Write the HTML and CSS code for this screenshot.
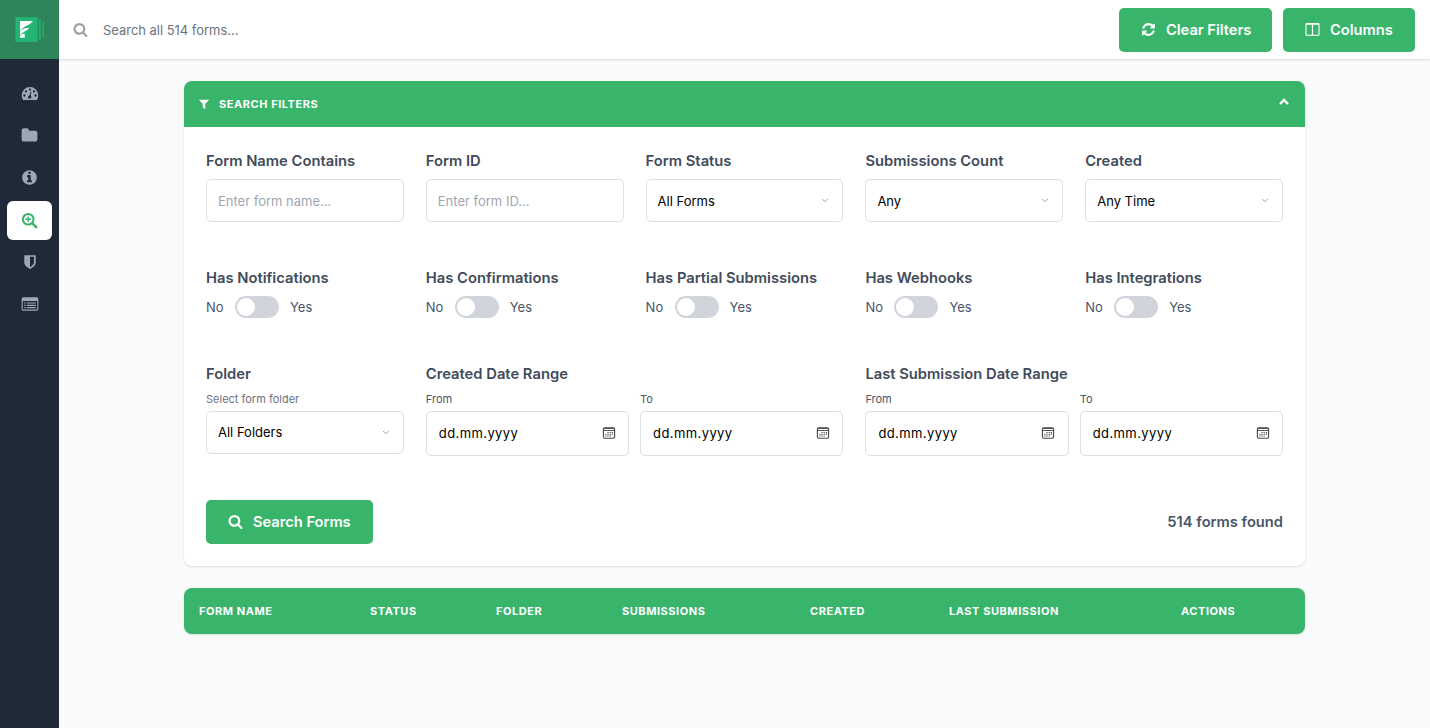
FILE: index.html
```html
<!DOCTYPE html>
<html lang="en">
<head>
<meta charset="utf-8">
<title>Search Forms</title>
<link rel="stylesheet" href="styles.css">
</head>
<body>
<svg width="0" height="0" class="defs">
  <symbol id="search" viewBox="0 0 1792 1792"><path d="M1216 832q0-185-131.500-316.500t-316.500-131.500-316.500 131.500-131.500 316.500 131.500 316.500 316.500 131.500 316.500-131.500 131.500-316.500zm512 832q0 52-38 90t-90 38q-54 0-90-38l-343-342q-179 124-399 124-143 0-273.500-55.500t-225-150-150-225-55.500-273.500 55.500-273.500 150-225 225-150 273.500-55.500 273.500 55.500 225 150 150 225 55.500 273.500q0 220-124 399l343 343q37 37 37 90z"/></symbol>
  <symbol id="chev" viewBox="0 0 8 5"><path d="M1 1l3 2.700L7 1" fill="none" stroke="#9a9fa8" stroke-width=".9"/></symbol>
  <symbol id="cal" viewBox="0 0 14 14"><rect x="1.400" y="1.700" width="11.200" height="10.600" rx="1.500" fill="none" stroke="#444" stroke-width="1.100"/><path d="M1.500 2.500h11M1.500 4.500h11" stroke="#444" stroke-width=".9"/><path d="M5.400 6.600h1.200M7.600 6.600h1.200M9.800 6.600h1.200M3.300 8.300h1.200M5.400 8.300h1.200M7.600 8.300h1.200M9.800 8.300h1.200M3.300 10h1.200M5.400 10h1.200M7.600 10h1.200" stroke="#444" stroke-width="1"/></symbol>
</svg>
<div class="app">
  <aside class="sidebar">
    <div class="logo">
      <svg width="32" height="28" viewBox="0 0 32 28"><path d="M1.500 3.200h22v24.800h-22z" fill="#22b573"/><path d="M24.700 5.200h2.200v20.600h-2.200z" fill="#22b573" opacity=".8"/><path d="M28.400 7.300H30v16.400h-1.600z" fill="#22b573" opacity=".8"/><path d="M6 7h12.700c-1.800 3.500-5.200 3.700-8.300 6.100-1.800 1.300-3 2.500-4.400 4.400zM6 18c2-3 5-4.200 9.400-4.200-1.300 2.600-3.600 2.900-5.500 4.100-1.500 1-2.500 1.900-3.900 3.300zM6 22c1.300-1.600 2.800-2.500 4.700-2.600v4.300H6z" fill="#fff"/></svg>
    </div>
    <nav class="nav">
      <a class="nav-item"><svg width="18" height="16" viewBox="0 0 18 16"><path fill="currentColor" d="M9 1a8.300 8.300 0 0 0-8.300 8.300c0 1.600.4 3.100 1.200 4.400.2.200.4.300.7.300h12.800c.3 0 .5-.1.700-.3.800-1.300 1.200-2.800 1.200-4.400A8.300 8.300 0 0 0 9 1z"/><g fill="#1f2937"><circle cx="3.400" cy="9.500" r="1.150"/><circle cx="5" cy="5.400" r="1.150"/><circle cx="9" cy="3.600" r="1.150"/><circle cx="13" cy="5.400" r="1.150"/><circle cx="14.600" cy="9.500" r="1.150"/><circle cx="8.700" cy="11" r="1.700"/></g><path d="M8.800 10.800l1.200-5" stroke="#1f2937" stroke-width="1"/></svg></a>
      <a class="nav-item"><svg width="17" height="17" viewBox="0 0 1792 1792"><path fill="currentColor" d="M1728 608v704q0 92-66 158t-158 66h-1216q-92 0-158-66t-66-158v-960q0-92 66-158t158-66h320q92 0 158 66t66 158v32h672q92 0 158 66t66 158z"/></svg></a>
      <a class="nav-item"><svg width="17" height="17" viewBox="0 0 1792 1792"><path fill="currentColor" d="M1152 1376v-160q0-14-9-23t-23-9h-96v-512q0-14-9-23t-23-9h-320q-14 0-23 9t-9 23v160q0 14 9 23t23 9h96v320h-96q-14 0-23 9t-9 23v160q0 14 9 23t23 9h448q14 0 23-9t9-23zm-128-896v-160q0-14-9-23t-23-9h-192q-14 0-23 9t-9 23v160q0 14 9 23t23 9h192q14 0 23-9t9-23zm640 416q0 209-103 385.500t-279.500 279.500-385.500 103-385.500-103-279.500-279.500-103-385.500 103-385.500 279.500-279.500 385.500-103 385.500 103 279.500 279.500 103 385.500z"/></svg></a>
      <a class="nav-item active"><svg width="17" height="17" viewBox="0 0 17 17" fill="none" stroke="currentColor"><circle cx="7.200" cy="7.200" r="5.300" stroke-width="2"/><path d="M11.200 11.200l4 4" stroke-width="2.500" stroke-linecap="round"/><path d="M7.200 4.400v5.600M4.400 7.200H10" stroke-width="1.400"/></svg></a>
      <a class="nav-item"><svg width="16" height="16" viewBox="0 0 1792 1792"><path fill="currentColor" d="M1344 960v-640h-448v1137q119-63 213-137 235-184 235-360zm192-768v768q0 86-33.500 170.500t-83 150-118 127.500-126.500 103-121 77.500-89.500 49.500-42.500 20q-12 6-26 6t-26-6q-16-7-42.500-20t-89.500-49.500-121-77.500-126.500-103-118-127.500-83-150-33.500-170.500v-768q0-26 19-45t45-19h1152q26 0 45 19t19 45z"/></svg></a>
      <a class="nav-item"><svg width="18" height="16" viewBox="0 0 18 16"><rect x="1.200" y="1.900" width="15.600" height="12.200" rx="1.200" fill="none" stroke="currentColor" stroke-width="1.100"/><path d="M1 2h16v3H1z" fill="currentColor"/><path d="M3.200 7h1.500M3.200 9.300h1.500M3.200 11.600h1.500M5.800 7h9M5.800 9.300h9M5.800 11.600h9" stroke="currentColor" stroke-width="1.200"/></svg></a>
    </nav>
  </aside>
  <div class="main">
    <header class="topbar">
      <svg class="top-search" width="15" height="15"><use href="#search"/></svg>
      <span class="search-text">Search all 514 forms...</span>
      <div class="btn clear"><svg width="15" height="15" viewBox="0 0 1792 1792"><path fill="currentColor" d="M1639 1056q0 5-1 7-64 268-268 434.500t-478 166.500q-146 0-282.500-55t-243.500-157l-129 129q-19 19-45 19t-45-19-19-45v-448q0-26 19-45t45-19h448q26 0 45 19t19 45-19 45l-137 137q71 66 161 102t187 36q134 0 250-65t186-179q11-17 53-117 8-23 30-23h192q13 0 22.500 9.500t9.500 22.500zm25-800v448q0 26-19 45t-45 19h-448q-26 0-45-19t-19-45 19-45l138-138q-148-137-349-137-134 0-250 65t-186 179q-11 17-53 117-8 23-30 23h-199q-13 0-22.500-9.500t-9.500-22.500v-7q65-268 270-434.500t480-166.500q146 0 284 55.500t245 156.500l130-129q19-19 45-19t45 19 19 45z"/></svg><span>Clear Filters</span></div>
      <div class="btn columns"><svg width="15" height="15" viewBox="0 0 15 15"><rect x="1" y="1.500" width="13" height="11.800" rx=".8" fill="none" stroke="currentColor" stroke-width="1.100"/><path d="M1 2.200h13M7.500 2v11" stroke="currentColor" stroke-width="1.200"/></svg><span>Columns</span></div>
    </header>
    <main class="content">
      <section class="card">
        <div class="card-head">
          <svg width="12" height="12" viewBox="0 0 1792 1792"><path fill="currentColor" d="M1595 295q17 41-14 70l-493 493v742q0 42-39 59-13 5-25 5-27 0-45-19l-256-256q-19-19-19-45v-486l-493-493q-31-29-14-70 17-39 59-39h1280q42 0 59 39z"/></svg>
          <span class="caps">SEARCH FILTERS</span>
          <svg class="collapse" width="12" height="8" viewBox="0 0 12 8"><path d="M2 6l4-4 4 4" fill="none" stroke="currentColor" stroke-width="2.300"/></svg>
        </div>
        <div class="card-body">
          <div class="grid">
            <div><div class="label">Form Name Contains</div><div class="field ph">Enter form name...</div></div>
            <div><div class="label">Form ID</div><div class="field ph">Enter form ID...</div></div>
            <div><div class="label">Form Status</div><div class="field">All Forms<svg width="8" height="5"><use href="#chev"/></svg></div></div>
            <div><div class="label">Submissions Count</div><div class="field">Any<svg width="8" height="5"><use href="#chev"/></svg></div></div>
            <div><div class="label">Created</div><div class="field">Any Time<svg width="8" height="5"><use href="#chev"/></svg></div></div>

            <div><div class="label">Has Notifications</div><div class="switch-row"><span class="no">No</span><i class="switch"></i><span>Yes</span></div></div>
            <div><div class="label">Has Confirmations</div><div class="switch-row"><span class="no">No</span><i class="switch"></i><span>Yes</span></div></div>
            <div><div class="label">Has Partial Submissions</div><div class="switch-row"><span class="no">No</span><i class="switch"></i><span>Yes</span></div></div>
            <div><div class="label">Has Webhooks</div><div class="switch-row"><span class="no">No</span><i class="switch"></i><span>Yes</span></div></div>
            <div><div class="label">Has Integrations</div><div class="switch-row"><span class="no">No</span><i class="switch"></i><span>Yes</span></div></div>

            <div><div class="label tight">Folder</div><div class="sub light">Select form folder</div><div class="field">All Folders<svg width="8" height="5"><use href="#chev"/></svg></div></div>
            <div class="wide"><div class="label tight">Created Date Range</div>
              <div class="dates">
                <div><div class="sub">From</div><div class="field date"><span>dd.mm.yyyy</span><svg width="14" height="14"><use href="#cal"/></svg></div></div>
                <div><div class="sub">To</div><div class="field date"><span>dd.mm.yyyy</span><svg width="14" height="14"><use href="#cal"/></svg></div></div>
              </div></div>
            <div class="wide"><div class="label tight">Last Submission Date Range</div>
              <div class="dates">
                <div><div class="sub">From</div><div class="field date"><span>dd.mm.yyyy</span><svg width="14" height="14"><use href="#cal"/></svg></div></div>
                <div><div class="sub">To</div><div class="field date"><span>dd.mm.yyyy</span><svg width="14" height="14"><use href="#cal"/></svg></div></div>
              </div></div>
          </div>
          <div class="actions">
            <div class="btn submit"><svg width="15" height="15"><use href="#search" fill="currentColor"/></svg><span>Search Forms</span></div>
            <span class="found">514 forms found</span>
          </div>
        </div>
      </section>
      <section class="table-head caps">
        <span>FORM NAME</span><span>STATUS</span><span>FOLDER</span><span>SUBMISSIONS</span><span>CREATED</span><span>LAST SUBMISSION</span><span>ACTIONS</span>
      </section>
    </main>
  </div>
</div>
</body>
</html>
```
FILE: styles.css
```css
* { box-sizing: border-box; }
body { margin: 0; background: #f9fafb; font-family: Inter, sans-serif; font-size: 13px; color: #4a5568; }
svg { display: block; flex: none; }
.defs { position: absolute; }
.app { display: flex; height: 728px; overflow: hidden; }

.sidebar { width: 59px; background: #1f2937; flex: none; }
.logo { height: 59px; background: #2f855a; padding: 13.800px 0 0 13.500px; }
.nav { padding: 15px 7px 0; display: flex; flex-direction: column; gap: 3.200px; }
.nav-item { height: 39px; border-radius: 6px; display: flex; align-items: center; justify-content: center; color: #a0a7b4; }
.nav-item.active { background: #fff; color: #38b56b; }

.main { flex: 1; min-width: 0; }
.topbar { height: 59px; background: #fff; display: flex; align-items: center; padding: 0 15px 0 14px; box-shadow: 0 1px 2px rgba(0,0,0,.13); }
.top-search { fill: #9ca0aa; }
.search-text { margin: 0 auto 0 15px; font-size: 12.950px; color: #6b7280; }
.btn { height: 44px; border-radius: 5px; background: #38b56b; color: #fff; font-weight: 600; font-size: 14.650px; display: flex; align-items: center; padding-left: 22px; gap: 10px; white-space: nowrap; }
.clear { width: 153px; margin-right: 11px; }
.columns { width: 132px; }

.content { width: 1121px; margin: 22px auto 0 125px; }
.card { background: #fff; border-radius: 8px; box-shadow: 0 1px 2px rgba(0,0,0,.12); }
.card-head { height: 46px; background: #38b56b; color: #fff; border-radius: 8px 8px 0 0; display: flex; align-items: center; padding: 0 15px 0 14px; }
.card-head .caps { margin-left: 9px; }
.caps { font-size: 11px; font-weight: 700; letter-spacing: .55px; white-space: nowrap; }
.collapse { margin: -4px 0 0 auto; }
.card-body { padding: 23px 22px 22px; }
.grid { display: grid; grid-template-columns: repeat(5, minmax(0, 1fr)); gap: 44.800px 22px; }
.wide { grid-column: span 2; }
.label { font-size: 14.750px; line-height: 22px; font-weight: 600; margin-bottom: 7px; white-space: nowrap; color: #414b5b; }
.label.tight { margin-bottom: 6px; }
.field { height: 43px; border: 1px solid #dcdfe4; border-radius: 5px; display: flex; align-items: center; justify-content: space-between; padding: 0 13px 0 11px; color: #000; }
.ph { color: #a0a6b1; }
.sub { font-size: 11px; line-height: 16px; margin-bottom: 4px; }
.light { color: #6b7280; }
.switch-row { display: flex; align-items: center; height: 21.500px; font-size: 13px; }
.no { width: 29px; }
.switch { width: 44px; height: 22px; border-radius: 11px; background: #d1d5db; margin-right: 11px; }
.switch::before { content: ""; display: block; width: 18px; height: 18px; border-radius: 50%; background: #fff; margin: 2px; }
.grid .tight { padding-top: .5px; height: 22.500px; }
.dates { display: grid; grid-template-columns: 1fr 1fr; gap: 11px; }
.date { height: 45px; padding: 0 12.500px 0 12px; }
.date span { letter-spacing: .4px; }
.actions { display: flex; align-items: center; justify-content: space-between; margin-top: 44.400px; }
.submit { width: 167px; }
.found { font-size: 14.700px; font-weight: 600; }
.table-head { margin-top: 22px; height: 46px; border-radius: 8px; background: #38b56b; color: #fff; display: grid; grid-template-columns: 171px 126px 126px 188px 139px 232px 1fr; align-items: center; padding-left: 15px; box-shadow: 0 1px 2px rgba(0,0,0,.12); }
```
